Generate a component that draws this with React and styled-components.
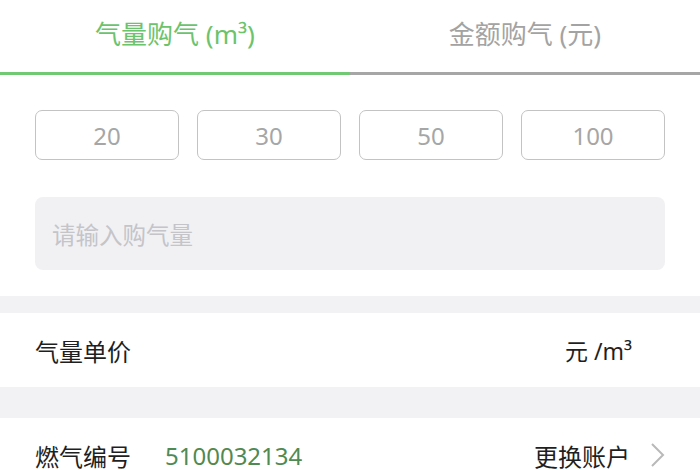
import React from 'react';
import styled, { createGlobalStyle } from 'styled-components';

const GlobalStyle = createGlobalStyle`
  html, body {
    margin: 0;
    padding: 0;
    background: #ffffff;
    font-family: "Noto Sans", "Noto Sans CJK SC", sans-serif;
  }
`;

const amounts = ['20', '30', '50', '100'];

const Page = styled.div`
  width: 700px;
  height: 470px;
  overflow: hidden;
  background: #ffffff;
`;

const TabBar = styled.div`
  display: flex;
  height: 75px;
`;

const Tab = styled.div`
  flex: 1;
  display: flex;
  align-items: center;
  justify-content: center;
  box-sizing: border-box;
  padding-bottom: 6px;
  font-size: 26px;
  color: ${p => (p.active ? '#6cc36d' : '#a3a3a3')};
  border-bottom: 3px solid ${p => (p.active ? '#72c973' : '#a6a6a6')};
`;

const Panel = styled.div`
  padding: 35px 35px 26px;
  display: flex;
  flex-direction: column;
  gap: 37px;
`;

const Amounts = styled.div`
  display: grid;
  grid-template-columns: repeat(4, 1fr);
  gap: 18px;
`;

const AmountButton = styled.div`
  height: 50px;
  box-sizing: border-box;
  border: 1.5px solid #c3c3c3;
  border-radius: 7px;
  display: flex;
  align-items: center;
  justify-content: center;
  font-size: 24px;
  color: #a6a6a6;
`;

const Input = styled.div`
  height: 73px;
  border-radius: 8px;
  background: #f1f1f4;
  display: flex;
  align-items: center;
  padding-left: 17px;
  font-size: 23.5px;
  color: #c4c4c9;
`;

const Band = styled.div`
  height: ${p => p.h}px;
  background: #f2f2f5;
`;

const Row = styled.div`
  height: 74px;
  display: flex;
  align-items: center;
  padding: 0 35px;
  font-size: 24px;
  color: #1f1f1f;
`;

const Label = styled.span`
  width: 130px;
`;

const Account = styled.span`
  flex: 1;
  color: #4f8a52;
  font-size: 24px;
`;

const Unit = styled.span`
  margin-left: auto;
  margin-right: 33px;
  font-size: 23px;
`;

const Change = styled.span`
  display: flex;
  align-items: center;
  gap: 20px;
`;

const Chevron = () => (
  <svg width="15" height="26" viewBox="0 0 15 26">
    <polyline points="2,2 13,13 2,24" fill="none" stroke="#b9b9b9" strokeWidth="2" />
  </svg>
);

export default function App() {
  return (
    <Page>
      <GlobalStyle />
      <TabBar>
        <Tab active>气量购气 (m³)</Tab>
        <Tab>金额购气 (元)</Tab>
      </TabBar>
      <Panel>
        <Amounts>
          {amounts.map(a => (
            <AmountButton key={a}>{a}</AmountButton>
          ))}
        </Amounts>
        <Input>请输入购气量</Input>
      </Panel>
      <Band h={17} />
      <Row>
        <Label>气量单价</Label>
        <Unit>元 /m³</Unit>
      </Row>
      <Band h={31} />
      <Row>
        <Label>燃气编号</Label>
        <Account>5100032134</Account>
        <Change>
          更换账户
          <Chevron />
        </Change>
      </Row>
    </Page>
  );
}
